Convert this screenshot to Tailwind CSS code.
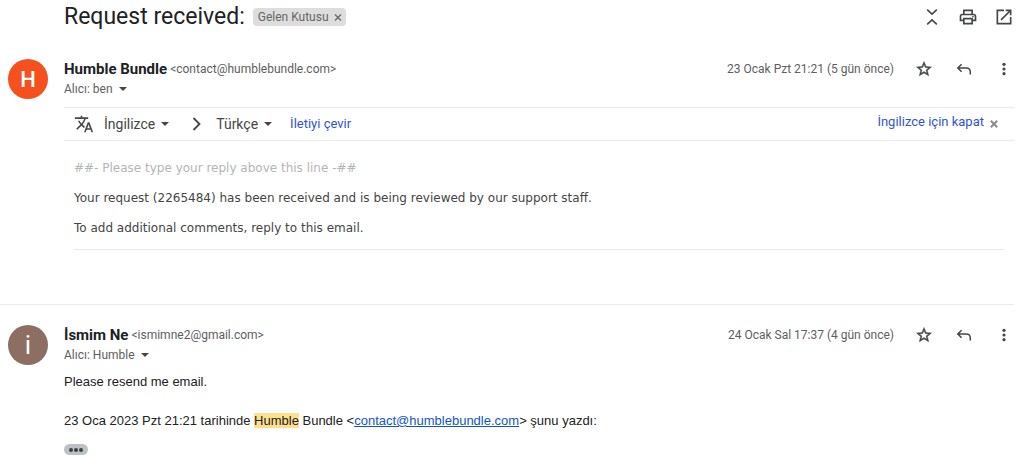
<!DOCTYPE html>
<html lang="tr">
<head>
    <meta charset="UTF-8">
    <meta name="viewport" content="width=device-width, initial-scale=1.0">
    <script src="https://cdn.jsdelivr.net/npm/@tailwindcss/browser@4"></script>
    <title>Request received:</title>
</head>
<body class="bg-white text-[#202124] font-[Roboto,sans-serif] overflow-hidden">

    <!-- subject -->
    <header class="flex items-center justify-between h-[34px] pl-16 pr-[10px]">
        <div class="flex items-center">
            <h1 class="text-[23px] leading-9">Request received:</h1>
            <div class="flex items-center gap-1 ml-2 h-[18px] px-1 rounded bg-[#ddd] text-[#666] text-[12px]">
                <span class="px-px">Gelen Kutusu</span>
                <button type="button" aria-label="Etiketi kaldır">
                    <svg class="size-2" viewBox="0 0 8 8" fill="none" stroke="currentColor" stroke-width="1.2"><path d="M1 1.5l6 6M7 1.5l-6 6"/></svg>
                </button>
            </div>
        </div>
        <div class="flex items-center gap-4 text-[#444746]">
            <button type="button" aria-label="Tümünü daralt">
                <svg class="size-5" viewBox="0 0 20 20" fill="none" stroke="currentColor" stroke-width="1.6"><path d="M5.2 2.6L10 7.2l4.8-4.6M5.2 17.4L10 12.8l4.8 4.6"/></svg>
            </button>
            <button type="button" aria-label="Yazdır">
                <svg class="size-5" viewBox="0 0 24 24" fill="currentColor"><path d="M19 8h-1V3H6v5H5c-1.66 0-3 1.34-3 3v6h4v4h12v-4h4v-6c0-1.66-1.34-3-3-3zM8 5h8v3H8V5zm8 12v2H8v-4h8v2zm2-2v-2H6v2H4v-4c0-.55.45-1 1-1h14c.55 0 1 .45 1 1v4h-2z"/><circle cx="18" cy="11.5" r="1"/></svg>
            </button>
            <button type="button" aria-label="Yeni pencerede aç">
                <svg class="size-5" viewBox="0 0 24 24" fill="currentColor"><path d="M19 19H5V5h7V3H3v18h18v-9h-2v7zM14 3v2h3.59l-9.83 9.83 1.41 1.41L19 6.41V10h2V3h-7z"/></svg>
            </button>
        </div>
    </header>

    <!-- first message -->
    <article class="flex pt-[25px] pl-2 pr-[10px]">
        <div class="flex items-center justify-center shrink-0 size-10 mr-4 rounded-full bg-[#f4511e] text-white text-[22px] font-medium">H</div>
        <div class="flex-1">
            <div class="flex items-center justify-between h-5">
                <div class="flex items-center gap-[3px]">
                    <h2 class="text-[15px] font-bold">Humble Bundle</h2>
                    <span class="text-[12px] text-[#5e5e5e]">&lt;contact@humblebundle.com&gt;</span>
                </div>
                <div class="flex items-center text-[#444746]">
                    <time class="mr-5 text-[12px] text-[#5e5e5e]">23 Ocak Pzt 21:21 (5 gün önce)</time>
                    <div class="flex items-center gap-5">
                        <button type="button" aria-label="Yıldız ekle" class="flex justify-center w-5">
                            <svg class="size-[18px]" viewBox="0 0 24 24" fill="currentColor" stroke="currentColor" stroke-width=".6"><path d="M22 9.24l-7.19-.62L12 2 9.19 8.63 2 9.24l5.46 4.73L5.82 21 12 17.27 18.18 21l-1.63-7.03L22 9.24zM12 15.4l-3.76 2.27 1-4.28-3.32-2.88 4.38-.38L12 6.1l1.71 4.04 4.38.38-3.32 2.88 1 4.28L12 15.4z"/></svg>
                        </button>
                        <button type="button" aria-label="Yanıtla">
                            <svg class="size-5" viewBox="0 0 20 20" fill="none" stroke="currentColor" stroke-width="1.5"><path d="M7.6 5.2L3.8 9l3.8 3.8M3.8 9h8.4c2.4 0 4.1 1.7 4.1 4v2.6"/></svg>
                        </button>
                        <button type="button" aria-label="Diğer">
                            <svg class="size-5" viewBox="0 0 20 20" fill="currentColor"><circle cx="10" cy="5.3" r="1.6"/><circle cx="10" cy="10" r="1.6"/><circle cx="10" cy="14.7" r="1.6"/></svg>
                        </button>
                    </div>
                </div>
            </div>
            <button type="button" class="flex items-center gap-[6px] h-5 text-[12px] text-[#5e5e5e]">
                Alıcı: ben
                <svg class="w-2 h-1" viewBox="0 0 8 4" fill="#444746"><path d="M0 0h8L4 4z"/></svg>
            </button>

            <!-- translate bar -->
            <div class="flex items-center justify-between h-[34px] mt-2 pl-[10px] pr-4 border-y border-[#ebebeb] text-[13px] text-[#444746]">
                <div class="flex items-center">
                    <svg class="size-5 mr-[10px]" viewBox="0 0 24 24" fill="currentColor"><path d="M12.87 15.07l-2.54-2.51.03-.03c1.74-1.94 2.98-4.17 3.71-6.53H17V4h-7V2H8v2H1v1.99h11.17C11.5 7.92 10.44 9.75 9 11.35 8.07 10.32 7.3 9.19 6.69 8h-2c.73 1.63 1.73 3.17 2.98 4.56l-5.09 5.02L4 19l5-5 3.11 3.11.76-2.04zM18.5 10h-2L12 22h2l1.12-3h4.75L21 22h2l-4.5-12zm-2.62 7l1.62-4.33L19.12 17h-3.24z"/></svg>
                    <select aria-label="Kaynak dil" class="appearance-none field-sizing-content bg-transparent text-[14px]"><option>İngilizce</option></select>
                    <svg class="w-2 h-1 ml-[6px]" viewBox="0 0 8 4" fill="#444746"><path d="M0 0h8L4 4z"/></svg>
                    <svg class="w-[9px] h-[14px] ml-[23px] mr-[15px]" viewBox="0 0 9 14" fill="none" stroke="currentColor" stroke-width="1.8"><path d="M1.5 1L7.5 7l-6 6"/></svg>
                    <select aria-label="Hedef dil" class="appearance-none field-sizing-content bg-transparent text-[14px]"><option>Türkçe</option></select>
                    <svg class="w-2 h-1 ml-[6px]" viewBox="0 0 8 4" fill="#444746"><path d="M0 0h8L4 4z"/></svg>
                    <a href="#" class="ml-[18px] text-[#3054d4]">İletiyi çevir</a>
                </div>
                <div class="flex items-center gap-[6px]">
                    <a href="#" class="pb-1 text-[#3054d4]">İngilizce için kapat</a>
                    <button type="button" aria-label="Kapat">
                        <svg class="size-2" viewBox="0 0 8 8" fill="none" stroke="#8c8c8c" stroke-width="2"><path d="M.8.8l6.4 6.4M7.2.8L.8 7.2"/></svg>
                    </button>
                </div>
            </div>

            <div class="mx-[10px] pt-[17px] pb-[11px] border-b border-[#ebebeb] font-['DejaVu_Sans',sans-serif] text-[12px] leading-5 text-[#444]">
                <p class="mb-[10px] text-[#b5b5b5]">##- Please type your reply above this line -##</p>
                <p class="mb-[10px]">Your request (2265484) has been received and is being reviewed by our support staff.</p>
                <p>To add additional comments, reply to this email.</p>
            </div>
        </div>
    </article>

    <!-- second message -->
    <article class="flex mt-[54px] mr-[10px] pt-5 pl-2 border-t border-[#e8eaed]">
        <div class="flex items-center justify-center shrink-0 size-10 mr-4 rounded-full bg-[#8d6e63] text-white text-[26px]">i</div>
        <div class="flex-1">
            <div class="flex items-center justify-between h-5">
                <div class="flex items-center gap-[3px]">
                    <h2 class="text-[15px] font-bold">İsmim Ne</h2>
                    <span class="text-[12px] text-[#5e5e5e]">&lt;ismimne2@gmail.com&gt;</span>
                </div>
                <div class="flex items-center text-[#444746]">
                    <time class="mr-5 text-[12px] text-[#5e5e5e]">24 Ocak Sal 17:37 (4 gün önce)</time>
                    <div class="flex items-center gap-5">
                        <button type="button" aria-label="Yıldız ekle" class="flex justify-center w-5">
                            <svg class="size-[18px]" viewBox="0 0 24 24" fill="currentColor" stroke="currentColor" stroke-width=".6"><path d="M22 9.24l-7.19-.62L12 2 9.19 8.63 2 9.24l5.46 4.73L5.82 21 12 17.27 18.18 21l-1.63-7.03L22 9.24zM12 15.4l-3.76 2.27 1-4.28-3.32-2.88 4.38-.38L12 6.1l1.71 4.04 4.38.38-3.32 2.88 1 4.28L12 15.4z"/></svg>
                        </button>
                        <button type="button" aria-label="Yanıtla">
                            <svg class="size-5" viewBox="0 0 20 20" fill="none" stroke="currentColor" stroke-width="1.5"><path d="M7.6 5.2L3.8 9l3.8 3.8M3.8 9h8.4c2.4 0 4.1 1.7 4.1 4v2.6"/></svg>
                        </button>
                        <button type="button" aria-label="Diğer">
                            <svg class="size-5" viewBox="0 0 20 20" fill="currentColor"><circle cx="10" cy="5.3" r="1.6"/><circle cx="10" cy="10" r="1.6"/><circle cx="10" cy="14.7" r="1.6"/></svg>
                        </button>
                    </div>
                </div>
            </div>
            <button type="button" class="flex items-center gap-[6px] h-5 text-[12px] text-[#5e5e5e]">
                Alıcı: Humble
                <svg class="w-2 h-1" viewBox="0 0 8 4" fill="#444746"><path d="M0 0h8L4 4z"/></svg>
            </button>

            <div class="pt-[7px] font-['Liberation_Sans',Arial,sans-serif] text-[13px] leading-5 text-[#222]">
                <p class="mb-[19px]">Please resend me email.</p>
                <p>23 Oca 2023 Pzt 21:21 tarihinde <mark class="bg-[#fddf8d] text-inherit">Humble</mark> Bundle &lt;<a href="mailto:contact@humblebundle.com" class="text-[#1155cc] underline">contact@humblebundle.com</a>&gt; şunu yazdı:</p>
                <button type="button" aria-label="Kısaltılmış içeriği göster" class="flex items-center justify-center gap-px w-6 h-[11px] mt-[13px] rounded-full bg-[#bdc1c6]">
                    <span class="size-1 rounded-full bg-[#3c4043]"></span>
                    <span class="size-1 rounded-full bg-[#3c4043]"></span>
                    <span class="size-1 rounded-full bg-[#3c4043]"></span>
                </button>
            </div>
        </div>
    </article>

</body>
</html>
